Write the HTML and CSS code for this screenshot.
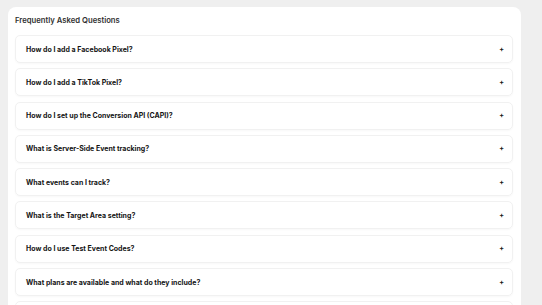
FILE: index.html
```html
<!DOCTYPE html>
<html lang="en">
<head>
    <meta charset="UTF-8">
    <meta name="viewport" content="width=device-width, initial-scale=1.0">
    <title>FAQ</title>
    <link rel="stylesheet" href="styles.css">
</head>
<body>
    <div class="faq-card">
        <h2 class="faq-title">Frequently Asked Questions</h2>
        <div class="faq-list">
            <div class="faq-item"><span>How do I add a Facebook Pixel?</span><span class="faq-plus">+</span></div>
            <div class="faq-item"><span>How do I add a TikTok Pixel?</span><span class="faq-plus">+</span></div>
            <div class="faq-item"><span>How do I set up the Conversion API (CAPI)?</span><span class="faq-plus">+</span></div>
            <div class="faq-item"><span>What is Server-Side Event tracking?</span><span class="faq-plus">+</span></div>
            <div class="faq-item"><span>What events can I track?</span><span class="faq-plus">+</span></div>
            <div class="faq-item"><span>What is the Target Area setting?</span><span class="faq-plus">+</span></div>
            <div class="faq-item"><span>How do I use Test Event Codes?</span><span class="faq-plus">+</span></div>
            <div class="faq-item"><span>What plans are available and what do they include?</span><span class="faq-plus">+</span></div>
            <div class="faq-item"></div>
        </div>
    </div>
</body>
</html>
```

FILE: styles.css
```css
* {
    margin: 0;
    padding: 0;
    box-sizing: border-box;
}

body {
    font-family: 'Inter', 'Liberation Sans', sans-serif;
    background: #efefef;
    padding: 7px 21px 0 8px;
    height: 305px;
    overflow: hidden;
}

.faq-card {
    background: #ffffff;
    border-radius: 8px;
    padding: 9px 8px 8px 7px;
}

.faq-title {
    font-size: 7.7px;
    font-weight: 600;
    color: #303030;
    line-height: 10px;
    margin-bottom: 9px;
}

.faq-list {
    display: flex;
    flex-direction: column;
    gap: 5.3px;
}

.faq-item {
    display: flex;
    justify-content: space-between;
    align-items: center;
    height: 28px;
    padding: 0 8px 0 10px;
    border: 1px solid #f1f1f1;
    border-radius: 5px;
    box-shadow: 0 1px 2px rgba(0, 0, 0, 0.03);
    font-size: 7px;
    font-weight: 700;
    color: #141414;
}

.faq-plus {
    font-size: 7px;
    font-weight: 700;
}
```
